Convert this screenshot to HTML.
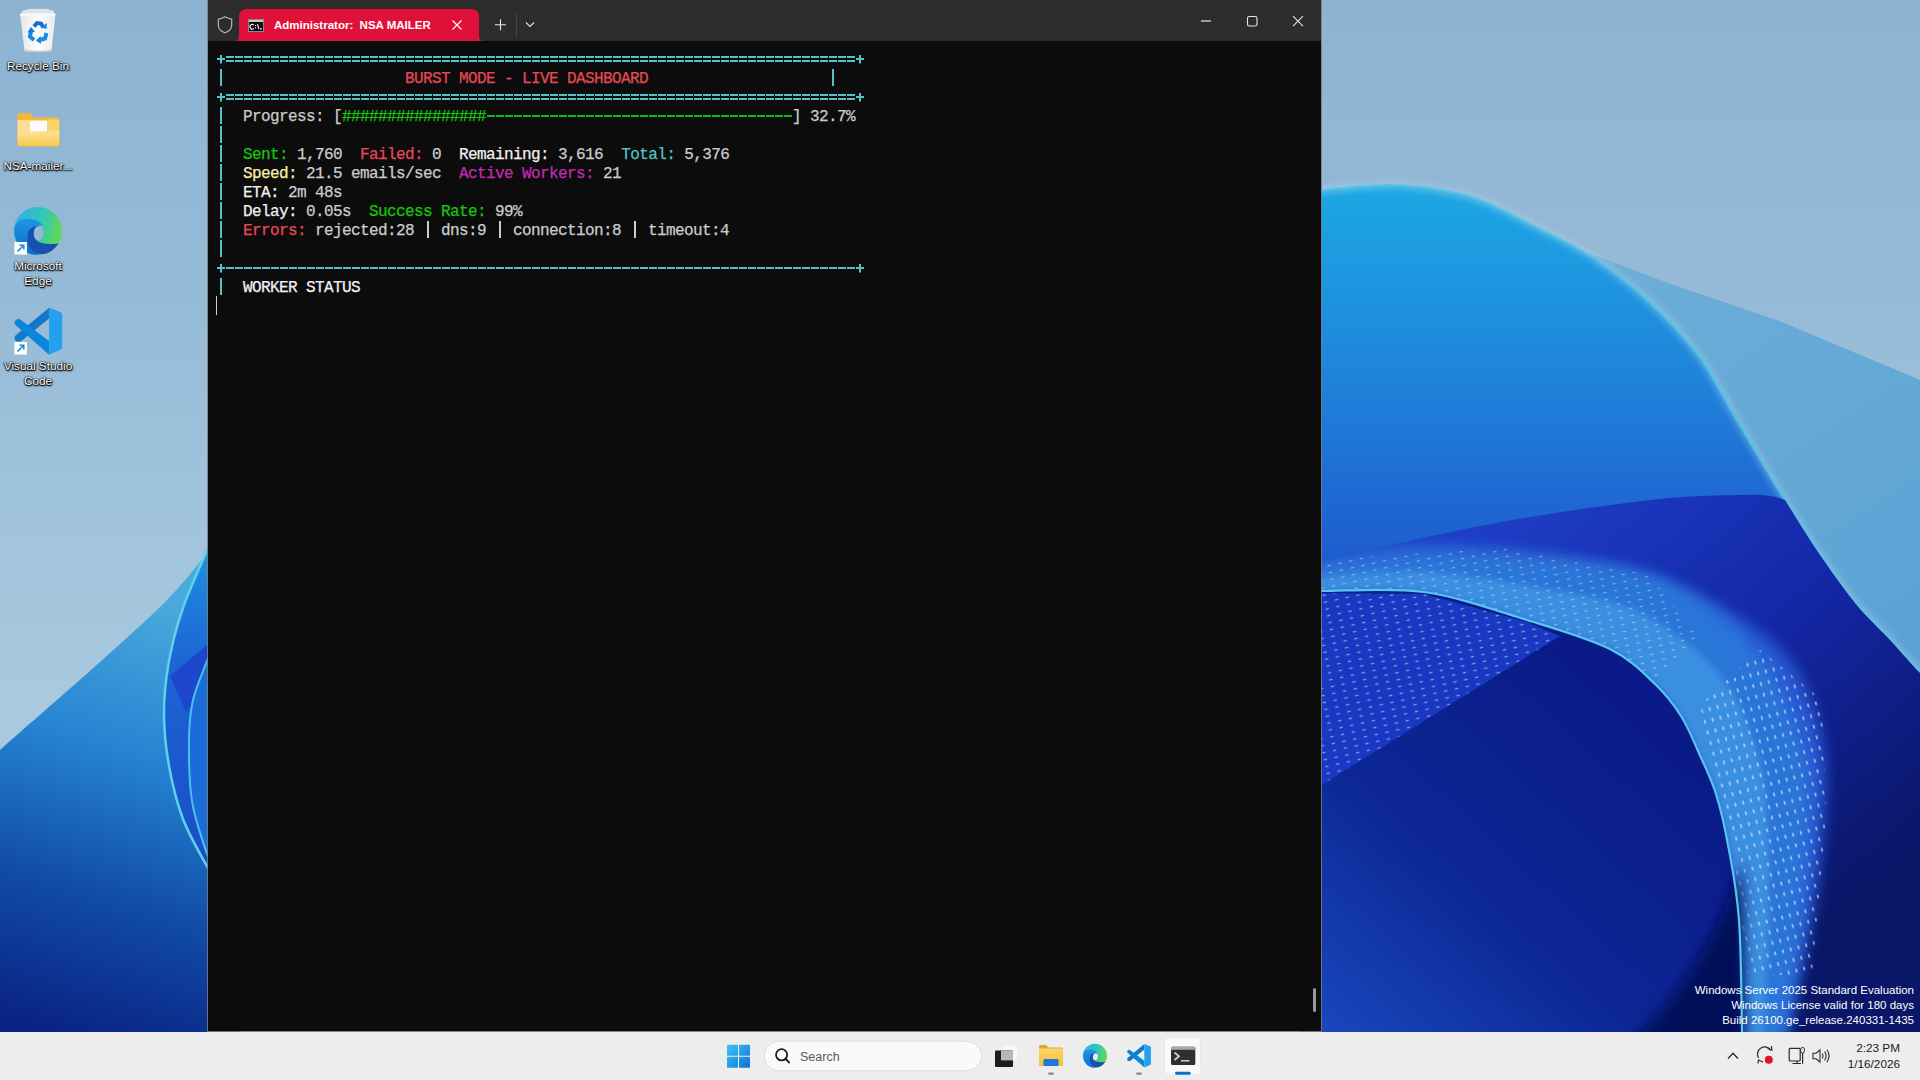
<!DOCTYPE html>
<html><head><meta charset="utf-8">
<style>
*{margin:0;padding:0;box-sizing:border-box}
html,body{width:1920px;height:1080px;overflow:hidden;position:relative;font-family:"Liberation Sans",sans-serif}
#wall{position:absolute;left:0;top:0;width:1920px;height:1080px}
.abs{position:absolute}
/* terminal */
#win{position:absolute;left:208px;top:0;width:1113px;height:1031px;background:#0c0c0c;box-shadow:0 0 0 1px rgba(125,125,125,.85)}
#tbar{position:absolute;left:0;top:0;width:1113px;height:41px;background:#2c2c2c}
#term{position:absolute;left:8px;top:49px;font-family:"Liberation Mono",monospace;font-size:16px;letter-spacing:-0.6px;-webkit-text-stroke:0.25px currentColor;line-height:19px;color:#cccccc;white-space:pre}
.ln{position:absolute;left:0;height:19px;white-space:pre}
.ln{transform:translateY(2px)}
.ln .pp{position:relative;top:-2px}
.pb{display:inline-block;vertical-align:top;position:relative;top:-2px;width:306px;height:19px;background:repeating-linear-gradient(90deg,transparent 0 1px,#14b41c 1px 9px) no-repeat 0 9px/306px 2px}
.c{color:#55c3c5}.r{color:#e74856}.g{color:#16c60c}.y{color:#f9f1a5}.m{color:#c22bb0}.w{color:#f2f2f2}

.pp{display:inline-block;width:9px;height:19px;vertical-align:top;background:linear-gradient(currentColor,currentColor) no-repeat 4px 1px/2px 17px}
.bd{position:absolute;left:0;width:648px;height:19px}
.bd::before,.bd::after{content:"";position:absolute;top:0;width:9px;height:19px;background:linear-gradient(#55c3c5,#55c3c5) no-repeat 0.5px 9px/8.5px 2px,linear-gradient(#55c3c5,#55c3c5) no-repeat 4px 5.5px/2px 8.5px}
.bd::before{left:0}.bd::after{left:639px}
.dbl{background:repeating-linear-gradient(90deg,transparent 0 1px,#55c3c5 1px 9px) no-repeat 9px 7px/630px 2px,repeating-linear-gradient(90deg,transparent 0 1px,#55c3c5 1px 9px) no-repeat 9px 11px/630px 2px}
.sgl{background:repeating-linear-gradient(90deg,transparent 0 1px,#55c3c5 1px 9px) no-repeat 9px 9px/630px 2px}
/* taskbar */
#task{position:absolute;left:0;top:1032px;width:1920px;height:48px;background:#ededed}
.dl{position:absolute;color:#fff;font-size:11.75px;text-align:center;width:76px;left:0;line-height:15px;text-shadow:0 0 1px #000,0 0 2px #000,1px 1px 2px #000,0 1px 1px #000}
#wm{position:absolute;right:6px;top:983px;color:#fff;font-size:11.5px;line-height:15px;text-align:right}
</style></head><body>
<svg id="wall" width="1920" height="1080" viewBox="0 0 1920 1080">
<defs>
<linearGradient id="sky" x1="0" y1="0" x2="0" y2="1080" gradientUnits="userSpaceOnUse"><stop offset="0" stop-color="#8cb3d2"/><stop offset="0.28" stop-color="#96bbd7"/><stop offset="0.46" stop-color="#a0c3dc"/><stop offset="0.65" stop-color="#a8c9de"/></linearGradient>
<linearGradient id="gA" x1="0" y1="185" x2="0" y2="560" gradientUnits="userSpaceOnUse"><stop offset="0" stop-color="#1ba8e4"/><stop offset="0.45" stop-color="#1f88dc"/><stop offset="1" stop-color="#1e5cce"/></linearGradient>
<linearGradient id="gB" x1="1600" y1="250" x2="1900" y2="700" gradientUnits="userSpaceOnUse"><stop offset="0" stop-color="#6eaed8"/><stop offset="1" stop-color="#5aa2d4"/></linearGradient>
<linearGradient id="gR" x1="1500" y1="500" x2="1850" y2="900" gradientUnits="userSpaceOnUse"><stop offset="0" stop-color="#1f3ec6"/><stop offset="0.5" stop-color="#1428a8"/><stop offset="1" stop-color="#0a1668"/></linearGradient>
<linearGradient id="gD" x1="1450" y1="560" x2="1850" y2="950" gradientUnits="userSpaceOnUse"><stop offset="0" stop-color="#3f98e2"/><stop offset="0.5" stop-color="#3585e0"/><stop offset="1" stop-color="#3a7ede"/></linearGradient>
<linearGradient id="gI" x1="1330" y1="1040" x2="1640" y2="700" gradientUnits="userSpaceOnUse"><stop offset="0" stop-color="#1848bc"/><stop offset="0.45" stop-color="#0d2796"/><stop offset="1" stop-color="#0a1a88"/></linearGradient>
<linearGradient id="gL" x1="170" y1="600" x2="40" y2="1031" gradientUnits="userSpaceOnUse"><stop offset="0" stop-color="#4aaadc"/><stop offset="0.35" stop-color="#2684d2"/><stop offset="0.68" stop-color="#114ba8"/><stop offset="1" stop-color="#0a2282"/></linearGradient>
<linearGradient id="gArc" x1="0" y1="548" x2="0" y2="868" gradientUnits="userSpaceOnUse"><stop offset="0" stop-color="#2090e0"/><stop offset="0.35" stop-color="#1c66d4"/><stop offset="1" stop-color="#1a4cc8"/></linearGradient>
<filter id="bl6" x="-20%" y="-20%" width="140%" height="140%"><feGaussianBlur stdDeviation="7"/></filter>
<filter id="bl3" x="-20%" y="-20%" width="140%" height="140%"><feGaussianBlur stdDeviation="3"/></filter>
<clipPath id="clipR"><path d="M1300.0 566.0 C1303.3 565.3 1289.2 568.8 1320.0 562.0 C1350.8 555.2 1430.0 535.3 1485.0 525.0 C1540.0 514.7 1607.5 505.0 1650.0 500.0 C1692.5 495.0 1720.0 495.7 1740.0 495.0 C1760.0 494.3 1762.5 495.2 1770.0 496.0 C1777.5 496.8 1782.5 499.3 1785.0 500.0 L1785.0 500.0 C1790.2 508.2 1804.3 531.8 1816.0 549.0 C1827.7 566.2 1842.7 587.8 1855.0 603.0 C1867.3 618.2 1879.2 628.3 1890.0 640.0 C1900.8 651.7 1911.7 664.7 1920.0 673.0 C1928.3 681.3 1936.7 687.2 1940.0 690.0 L1940 1045 L1300 1045 Z"/></clipPath>
<pattern id="dotV" width="8" height="11" patternUnits="userSpaceOnUse" patternTransform="rotate(-15)"><ellipse cx="4" cy="5.5" rx="0.9" ry="2.2" fill="#e8ecff"/></pattern>
<pattern id="dotH" width="11" height="7" patternUnits="userSpaceOnUse" patternTransform="rotate(-12)"><ellipse cx="5.5" cy="3.5" rx="2" ry="0.8" fill="#e8ecff"/></pattern>
</defs>
<rect width="1920" height="1080" fill="url(#sky)"/>
<path d="M1500 218 L1580 250 L1671 284 L1782 322 L1920 380 L1960 397 L1960 1045 L1300 1045 Z" fill="url(#gB)"/>
<path d="M1290.0 194.0 C1295.0 193.4 1306.7 191.8 1320.0 190.5 C1333.3 189.2 1356.7 186.8 1370.0 186.0 C1383.3 185.2 1388.3 184.8 1400.0 185.5 C1411.7 186.2 1426.7 187.6 1440.0 190.0 C1453.3 192.4 1465.7 194.7 1480.0 200.0 C1494.3 205.3 1507.3 212.5 1526.0 222.0 C1544.7 231.5 1571.3 243.6 1592.0 257.0 C1612.7 270.4 1632.2 286.0 1650.0 302.5 C1667.8 319.0 1685.2 337.6 1699.0 356.0 C1712.8 374.4 1720.0 391.2 1733.0 413.0 C1746.0 434.8 1763.2 464.3 1777.0 487.0 C1790.8 509.7 1803.0 529.7 1816.0 549.0 C1829.0 568.3 1842.7 587.8 1855.0 603.0 C1867.3 618.2 1879.2 628.3 1890.0 640.0 C1900.8 651.7 1911.7 664.7 1920.0 673.0 C1928.3 681.3 1936.7 687.2 1940.0 690.0 L1940 1045 L1300 1045 Z" fill="url(#gA)"/>
<path d="M1290.0 194.0 C1295.0 193.4 1306.7 191.8 1320.0 190.5 C1333.3 189.2 1356.7 186.8 1370.0 186.0 C1383.3 185.2 1388.3 184.8 1400.0 185.5 C1411.7 186.2 1426.7 187.6 1440.0 190.0 C1453.3 192.4 1465.7 194.7 1480.0 200.0 C1494.3 205.3 1507.3 212.5 1526.0 222.0 C1544.7 231.5 1571.3 243.6 1592.0 257.0 C1612.7 270.4 1632.2 286.0 1650.0 302.5 C1667.8 319.0 1685.2 337.6 1699.0 356.0 C1712.8 374.4 1720.0 391.2 1733.0 413.0 C1746.0 434.8 1763.2 464.3 1777.0 487.0 C1790.8 509.7 1803.0 529.7 1816.0 549.0 C1829.0 568.3 1842.7 587.8 1855.0 603.0 C1867.3 618.2 1879.2 628.3 1890.0 640.0 C1900.8 651.7 1911.7 664.7 1920.0 673.0 C1928.3 681.3 1936.7 687.2 1940.0 690.0 " fill="none" stroke="#b4d4ea" stroke-width="6" opacity="0.5" filter="url(#bl3)"/>
<path d="M1290.0 194.0 C1295.0 193.4 1306.7 191.8 1320.0 190.5 C1333.3 189.2 1356.7 186.8 1370.0 186.0 C1383.3 185.2 1388.3 184.8 1400.0 185.5 C1411.7 186.2 1426.7 187.6 1440.0 190.0 C1453.3 192.4 1465.7 194.7 1480.0 200.0 C1494.3 205.3 1507.3 212.5 1526.0 222.0 C1544.7 231.5 1571.3 243.6 1592.0 257.0 C1612.7 270.4 1632.2 286.0 1650.0 302.5 C1667.8 319.0 1685.2 337.6 1699.0 356.0 C1712.8 374.4 1720.0 391.2 1733.0 413.0 C1746.0 434.8 1763.2 464.3 1777.0 487.0 C1790.8 509.7 1803.0 529.7 1816.0 549.0 C1829.0 568.3 1842.7 587.8 1855.0 603.0 C1867.3 618.2 1879.2 628.3 1890.0 640.0 C1900.8 651.7 1911.7 664.7 1920.0 673.0 C1928.3 681.3 1936.7 687.2 1940.0 690.0 " fill="none" stroke="#4cc4e8" stroke-width="2.5" opacity="0.85"/>
<path d="M1300.0 566.0 C1303.3 565.3 1289.2 568.8 1320.0 562.0 C1350.8 555.2 1430.0 535.3 1485.0 525.0 C1540.0 514.7 1607.5 505.0 1650.0 500.0 C1692.5 495.0 1720.0 495.7 1740.0 495.0 C1760.0 494.3 1762.5 495.2 1770.0 496.0 C1777.5 496.8 1782.5 499.3 1785.0 500.0 L1785.0 500.0 C1790.2 508.2 1804.3 531.8 1816.0 549.0 C1827.7 566.2 1842.7 587.8 1855.0 603.0 C1867.3 618.2 1879.2 628.3 1890.0 640.0 C1900.8 651.7 1911.7 664.7 1920.0 673.0 C1928.3 681.3 1936.7 687.2 1940.0 690.0 L1940 1045 L1300 1045 Z" fill="url(#gR)"/>
<g clip-path="url(#clipR)"><path d="M1300.0 548.0 C1303.5 547.7 1301.0 546.7 1321.0 546.0 C1341.0 545.3 1383.5 542.8 1420.0 544.0 C1456.5 545.2 1501.7 547.3 1540.0 553.0 C1578.3 558.7 1618.3 568.2 1650.0 578.0 C1681.7 587.8 1706.7 598.3 1730.0 612.0 C1753.3 625.7 1775.0 640.3 1790.0 660.0 C1805.0 679.7 1814.2 706.7 1820.0 730.0 C1825.8 753.3 1825.8 771.7 1825.0 800.0 C1824.2 828.3 1820.0 866.7 1815.0 900.0 C1810.0 933.3 1800.8 975.8 1795.0 1000.0 C1789.2 1024.2 1782.5 1037.5 1780.0 1045.0 L1742 1045 L1742.0 1045.0 C1742.0 1042.5 1742.5 1050.8 1742.0 1030.0 C1741.5 1009.2 1741.2 950.0 1739.0 920.0 C1736.8 890.0 1732.8 871.0 1729.0 850.0 C1725.2 829.0 1721.2 810.5 1716.0 794.0 C1710.8 777.5 1703.8 764.0 1698.0 751.0 C1692.2 738.0 1688.0 727.0 1681.0 716.0 C1674.0 705.0 1667.8 696.2 1656.0 685.0 C1644.2 673.8 1631.5 659.8 1610.0 649.0 C1588.5 638.2 1558.0 629.5 1527.0 620.0 C1496.0 610.5 1458.3 596.8 1424.0 592.0 C1389.7 587.2 1341.7 591.2 1321.0 591.0 C1300.3 590.8 1303.5 591.0 1300.0 591.0 Z" fill="#2558d2" filter="url(#bl6)"/>
<path d="M1300.0 566.0 C1303.5 565.5 1299.6 565.3 1321.2 563.0 C1342.8 560.7 1392.1 553.2 1429.6 552.4 C1467.0 551.5 1509.6 554.4 1546.0 557.9 C1582.5 561.3 1619.1 563.4 1648.2 573.1 C1677.4 582.8 1701.7 601.0 1721.2 615.9 C1740.7 630.8 1754.0 646.6 1765.4 662.3 C1776.7 678.0 1782.4 692.8 1789.2 710.1 C1796.1 727.3 1803.6 744.7 1806.7 765.6 C1809.7 786.5 1808.7 810.6 1807.7 835.6 C1806.7 860.6 1804.3 883.3 1800.8 915.5 C1797.4 947.7 1790.5 1007.3 1787.0 1028.9 C1783.5 1050.5 1781.2 1042.3 1780.0 1045.0 L1742 1045 L1742.0 1045.0 C1742.0 1042.5 1742.5 1050.8 1742.0 1030.0 C1741.5 1009.2 1741.2 950.0 1739.0 920.0 C1736.8 890.0 1732.8 871.0 1729.0 850.0 C1725.2 829.0 1721.2 810.5 1716.0 794.0 C1710.8 777.5 1703.8 764.0 1698.0 751.0 C1692.2 738.0 1688.0 727.0 1681.0 716.0 C1674.0 705.0 1667.8 696.2 1656.0 685.0 C1644.2 673.8 1631.5 659.8 1610.0 649.0 C1588.5 638.2 1558.0 629.5 1527.0 620.0 C1496.0 610.5 1458.3 596.8 1424.0 592.0 C1389.7 587.2 1341.7 591.2 1321.0 591.0 C1300.3 590.8 1303.5 591.0 1300.0 591.0 Z" fill="#2c74d8" filter="url(#bl6)"/>
<path d="M1300.0 578.0 C1303.5 577.8 1300.0 578.0 1321.1 577.0 C1342.2 576.0 1390.8 570.4 1426.8 572.2 C1462.8 573.9 1503.0 581.5 1537.0 587.5 C1570.9 593.4 1604.9 598.0 1630.7 607.9 C1656.5 617.9 1675.4 634.2 1691.7 647.2 C1707.9 660.2 1718.7 672.5 1728.2 685.9 C1737.8 699.4 1743.2 712.6 1749.1 728.1 C1755.0 743.6 1760.5 759.9 1763.7 779.1 C1766.9 798.2 1767.5 819.7 1768.3 842.8 C1769.2 865.9 1769.6 886.7 1768.9 917.8 C1768.2 948.9 1765.5 1008.3 1764.0 1029.5 C1762.5 1050.7 1760.7 1042.4 1760.0 1045.0 L1742 1045 L1742.0 1045.0 C1742.0 1042.5 1742.5 1050.8 1742.0 1030.0 C1741.5 1009.2 1741.2 950.0 1739.0 920.0 C1736.8 890.0 1732.8 871.0 1729.0 850.0 C1725.2 829.0 1721.2 810.5 1716.0 794.0 C1710.8 777.5 1703.8 764.0 1698.0 751.0 C1692.2 738.0 1688.0 727.0 1681.0 716.0 C1674.0 705.0 1667.8 696.2 1656.0 685.0 C1644.2 673.8 1631.5 659.8 1610.0 649.0 C1588.5 638.2 1558.0 629.5 1527.0 620.0 C1496.0 610.5 1458.3 596.8 1424.0 592.0 C1389.7 587.2 1341.7 591.2 1321.0 591.0 C1300.3 590.8 1303.5 591.0 1300.0 591.0 Z" fill="#3b8fe0" filter="url(#bl3)"/>
<path d="M1700 705 L1760 650 L1822 700 L1826 820 L1812 975 L1748 975 L1735 860 Z" fill="url(#dotV)" opacity="0.7"/>
<path d="M1321 560 L1500 548 L1650 575 L1700 640 L1640 690 L1527 618 L1424 590 L1321 590 Z" fill="url(#dotH)" opacity="0.45"/></g>
<path d="M1300.0 591.0 C1303.5 591.0 1300.3 590.8 1321.0 591.0 C1341.7 591.2 1389.7 587.2 1424.0 592.0 C1458.3 596.8 1496.0 610.5 1527.0 620.0 C1558.0 629.5 1588.5 638.2 1610.0 649.0 C1631.5 659.8 1644.2 673.8 1656.0 685.0 C1667.8 696.2 1674.0 705.0 1681.0 716.0 C1688.0 727.0 1692.2 738.0 1698.0 751.0 C1703.8 764.0 1710.8 777.5 1716.0 794.0 C1721.2 810.5 1725.2 829.0 1729.0 850.0 C1732.8 871.0 1736.8 890.0 1739.0 920.0 C1741.2 950.0 1741.5 1009.2 1742.0 1030.0 C1742.5 1050.8 1742.0 1042.5 1742.0 1045.0 L1300 1045 Z" fill="url(#gI)"/>
<path d="M1300 593 L1424 594 L1527 622 L1560 636 L1320 786 L1300 798 Z" fill="#1a3ac4" opacity="0.95"/>
<path d="M1300 593 L1424 594 L1527 622 L1560 636 L1320 786 L1300 798 Z" fill="url(#dotH)" opacity="0.55"/>
<path d="M1630 1045 L1745 1045 L1742 860 Q1715 960 1630 1045 Z" fill="#060e52" filter="url(#bl6)" opacity="0.9"/>
<path d="M1300.0 591.0 C1303.5 591.0 1300.3 590.8 1321.0 591.0 C1341.7 591.2 1389.7 587.2 1424.0 592.0 C1458.3 596.8 1496.0 610.5 1527.0 620.0 C1558.0 629.5 1588.5 638.2 1610.0 649.0 C1631.5 659.8 1644.2 673.8 1656.0 685.0 C1667.8 696.2 1674.0 705.0 1681.0 716.0 C1688.0 727.0 1692.2 738.0 1698.0 751.0 C1703.8 764.0 1710.8 777.5 1716.0 794.0 C1721.2 810.5 1725.2 829.0 1729.0 850.0 C1732.8 871.0 1736.8 890.0 1739.0 920.0 C1741.2 950.0 1741.5 1009.2 1742.0 1030.0 C1742.5 1050.8 1742.0 1042.5 1742.0 1045.0 " fill="none" stroke="#58c6ee" stroke-width="2.2"/>
<path d="M-20.0 770.0 C-16.7 766.7 -20.0 768.0 0.0 750.0 C20.0 732.0 72.5 686.7 100.0 662.0 C127.5 637.3 147.5 619.7 165.0 602.0 C182.5 584.3 192.5 571.0 205.0 556.0 C217.5 541.0 234.2 519.3 240.0 512.0 L240 1045 L-20 1045 Z" fill="url(#gL)"/>
<path d="M215.0 530.0 C213.8 533.0 213.3 535.0 208.0 548.0 C202.7 561.0 189.5 589.2 183.0 608.0 C176.5 626.8 172.2 643.5 169.0 661.0 C165.8 678.5 164.0 695.5 164.0 713.0 C164.0 730.5 165.8 748.3 169.0 766.0 C172.2 783.7 176.5 802.0 183.0 819.0 C189.5 836.0 201.8 857.0 208.0 868.0 C214.2 879.0 218.0 882.2 220.0 885.0 L240 885 L240 530 Z" fill="url(#gArc)"/>
<path d="M170 676 L212 641 L212 700 L196 700 L186 712 Z" fill="#1c46cc"/>
<path d="M215.0 640.0 C213.7 643.5 210.7 651.0 207.0 661.0 C203.3 671.0 196.0 686.8 193.0 700.0 C190.0 713.2 189.2 723.2 189.0 740.0 C188.8 756.8 189.0 782.0 192.0 801.0 C195.0 820.0 203.2 842.5 207.0 854.0 C210.8 865.5 213.7 867.3 215.0 870.0 L215 870 L215 640 Z" fill="#1a6cd8"/>
<path d="M215.0 640.0 C213.7 643.5 210.7 651.0 207.0 661.0 C203.3 671.0 196.0 686.8 193.0 700.0 C190.0 713.2 189.2 723.2 189.0 740.0 C188.8 756.8 189.0 782.0 192.0 801.0 C195.0 820.0 203.2 842.5 207.0 854.0 C210.8 865.5 213.7 867.3 215.0 870.0 " fill="none" stroke="#4cc0ec" stroke-width="2"/>
<path d="M215.0 530.0 C213.8 533.0 213.3 535.0 208.0 548.0 C202.7 561.0 189.5 589.2 183.0 608.0 C176.5 626.8 172.2 643.5 169.0 661.0 C165.8 678.5 164.0 695.5 164.0 713.0 C164.0 730.5 165.8 748.3 169.0 766.0 C172.2 783.7 176.5 802.0 183.0 819.0 C189.5 836.0 201.8 857.0 208.0 868.0 C214.2 879.0 218.0 882.2 220.0 885.0 " fill="none" stroke="#5ed2ea" stroke-width="2.5"/>
</svg>


<!-- desktop icons -->
<svg class="abs" style="left:0;top:0" width="80" height="400" viewBox="0 0 80 400">
 <defs>
  <linearGradient id="binG" x1="0" y1="0" x2="1" y2="0"><stop offset="0" stop-color="#e4e8ec"/><stop offset="0.5" stop-color="#fbfbfc"/><stop offset="1" stop-color="#e8ecef"/></linearGradient>
  <linearGradient id="fldF" x1="0" y1="0" x2="0" y2="1"><stop offset="0" stop-color="#fde39a"/><stop offset="1" stop-color="#f9c94a"/></linearGradient>
  <linearGradient id="edgeT" x1="0" y1="0" x2="1" y2="0.3"><stop offset="0" stop-color="#32aee8"/><stop offset="0.55" stop-color="#2ec4c4"/><stop offset="1" stop-color="#5cd85a"/></linearGradient>
  <linearGradient id="edgeB" x1="0" y1="0" x2="0" y2="1"><stop offset="0" stop-color="#1f95e0"/><stop offset="1" stop-color="#0a6fcf"/></linearGradient>
 </defs>
 <!-- recycle bin -->
 <path d="M22 11 Q28 8 38 9 Q48 8 54 11 L54 14 L22 14 Z" fill="#dfe3e6"/>
 <path d="M20 13.5 L55.5 13.5 L51.5 51 Q38 53 24.5 51 Z" fill="url(#binG)"/>
 <path d="M20 13.5 L55.5 13.5 L55 16 L20.5 16 Z" fill="#f4f6f7"/>
 <path d="M24.5 49.5 Q38 52 51.5 49.5 L51.5 51.5 Q38 53 24.5 51.5 Z" fill="#c9cdd0"/>
 <g stroke-linecap="butt" fill="none" stroke-width="4">
  <path d="M34 26.5 L37 23 L41 23.5 L43.5 27.5" stroke="#1670d0"/>
  <path d="M40.5 27.5 L46.5 29 L47 23 Z" fill="#1a86e0" stroke="none"/>
  <path d="M46.5 33 L45 38.5 L39.5 40" stroke="#1a8ce6"/>
  <path d="M40.5 36 L36 40.5 L41 44 Z" fill="#1680e0" stroke="none"/>
  <path d="M34 40 L30 36.5 L31 31" stroke="#1688e4"/>
  <path d="M27.5 32.5 L31 27 L35 32 Z" fill="#1478d8" stroke="none"/>
 </g>
 <!-- folder -->
 <path d="M17.5 115 Q17.5 113.3 19.5 113.3 L30 113.3 L33.5 117.5 L57.5 117.5 Q59.3 117.5 59.3 119.5 L59.3 144.5 Q59.3 146.3 57.5 146.3 L19.3 146.3 Q17.5 146.3 17.5 144.5 Z" fill="#f3b934"/>
 <rect x="30" y="120.5" width="17" height="12" fill="#fafafa"/>
 <path d="M17.5 132 L59.3 130.5 L59.3 144.5 Q59.3 146.3 57.5 146.3 L19.3 146.3 Q17.5 146.3 17.5 144.5 Z" fill="url(#fldF)"/>
 <path d="M17.5 120 L30 120 L30 132 L17.5 132 Z" fill="#fbe0a0" opacity="0.9"/>
 <path d="M47 119.5 L59.3 119.5 L59.3 131 L47 131.5 Z" fill="#fbd775" opacity="0.9"/>
 <!-- edge -->
 <g transform="translate(14 207)">
  <path d="M46.8 31.4 A24 24 0 1 0 24.5 48 Q36 47 44.5 36.5 Z" fill="url(#edgeT)"/>
  <path d="M0.3 21 Q2 12.5 12.5 11.8 Q22.5 11.5 29 18 Q21 18 17 23 Q12 30 15 38 Q18 45 25 48 Q12 48.5 4.5 38 Q-0.5 30 0.3 21 Z" fill="url(#edgeB)"/>
  <path d="M13.4 29.5 Q13.5 21.5 20 19.5 Q26.5 18 30 23 Q23 20.5 20.5 26.5 Q19.5 33 26 35.5 Q34 38 44.5 36.5 Q40 43.5 32.5 46.5 Q25 48.5 19.5 45 Q13.2 40 13.4 29.5 Z" fill="#1851ac"/>
  <path d="M19.8 25.5 Q20 19.8 24.8 19.2 Q29.6 19.2 29.7 25 Q29.7 31.2 25.5 33.2 Q20.5 33.5 19.8 28 Z" fill="#94b8d5"/>
 </g>
 <!-- vscode -->
 <g transform="translate(14 307)">
  <path d="M35.1 0.8 L35.1 11.5 L8 33.5 Q4 36 1.5 33.5 Q-0.5 31 1.5 28.5 Z" fill="#1677c6"/>
  <path d="M1.5 13.5 Q4 11 7 13 L35.1 34 L35.1 47.7 L1.5 18 Q-0.5 15.8 1.5 13.5 Z" fill="#0a87da"/>
  <path d="M35.1 0.5 L46.5 5.2 Q48.2 6 48.2 8 L48.2 40 Q48.2 42 46.5 42.8 L35.1 47.7 Z" fill="#25a0ec"/>
 </g>
 <!-- shortcut arrows -->
 <g>
  <rect x="14.4" y="242" width="12.5" height="12.5" fill="#fff"/>
  <path d="M17.5 251.5 L23.5 245.5 M19.5 245.2 L23.8 245.2 L23.8 249.5" stroke="#1a8ad8" stroke-width="1.6" fill="none"/>
  <rect x="14.4" y="342" width="12.5" height="12.5" fill="#fff"/>
  <path d="M17.5 351.5 L23.5 345.5 M19.5 345.2 L23.8 345.2 L23.8 349.5" stroke="#1a8ad8" stroke-width="1.6" fill="none"/>
 </g>
</svg>
<div class="dl" style="top:58px">Recycle Bin</div>
<div class="dl" style="top:158px">NSA-mailer...</div>
<div class="dl" style="top:258px">Microsoft<br>Edge</div>
<div class="dl" style="top:358px">Visual Studio<br>Code</div>

<div id="win">
 <div id="tbar">
  <svg class="abs" style="left:0;top:0" width="1113" height="41" viewBox="0 0 1113 41">
   <path d="M10.3 19.2 Q14 18.6 17 16.8 Q20 18.6 23.7 19.2 L23.7 25.5 Q23.5 30.5 17 32.8 Q10.5 30.5 10.3 25.5 Z" fill="none" stroke="#b8b8b8" stroke-width="1.2"/>
   <path d="M27 41 Q31 41 31 36 L31 17 Q31 9 39 9 L263 9 Q271 9 271 17 L271 36 Q271 41 275 41 Z" fill="#df1139"/>
   <rect x="40.5" y="19.5" width="15" height="12" fill="#0c0c0c" stroke="#8a8a8a" stroke-width="1"/>
   <rect x="41" y="20" width="14" height="2" fill="#c8c8c8"/>
   <path d="M45.8 25.2 A2.1 2.5 0 1 0 45.8 28.4" fill="none" stroke="#fff" stroke-width="1.1"/><rect x="47" y="25" width="1.1" height="1.1" fill="#fff"/><rect x="47" y="27.2" width="1.1" height="1.1" fill="#fff"/><path d="M49.5 24.2 L50.8 29.2" stroke="#fff" stroke-width="1.1"/><rect x="52" y="28.3" width="2" height="1.1" fill="#fff"/>
   <path d="M244.5 20.5 L253.5 29.5 M253.5 20.5 L244.5 29.5" stroke="#fff" stroke-width="1.1"/>
   <path d="M287 24.7 L298 24.7 M292.5 19.2 L292.5 30.2" stroke="#e8e8e8" stroke-width="1.1"/>
   <path d="M308.5 13 L308.5 37" stroke="#444" stroke-width="1"/>
   <path d="M318 22.5 L322 26.5 L326 22.5" fill="none" stroke="#e0e0e0" stroke-width="1.1"/>
   <path d="M993 21 L1003 21" stroke="#e8e8e8" stroke-width="1.2"/>
   <rect x="1039.5" y="16.5" width="9.5" height="9.5" rx="1.8" fill="none" stroke="#e8e8e8" stroke-width="1.1"/>
   <path d="M1085 16.2 L1095 26.2 M1095 16.2 L1085 26.2" stroke="#e8e8e8" stroke-width="1.1"/>
  </svg>
  <div class="abs" style="left:66px;top:18px;color:#fff;font-size:11.5px;font-weight:bold;line-height:15px;white-space:pre">Administrator:  NSA MAILER</div>
 </div>
 <div id="term">
<div class="bd dbl" style="top:0"></div>
<div class="ln" style="top:19px"><span class="pp c"></span>                    <span class="r">BURST MODE - LIVE DASHBOARD</span>                    <span class="pp c"></span></div>
<div class="bd dbl" style="top:38px"></div>
<div class="ln" style="top:57px"><span class="pp c"></span>  Progress: [<span class="g">################</span><span class="pb"></span>] 32.7%</div>
<div class="ln" style="top:76px"><span class="pp c"></span></div>
<div class="ln" style="top:95px"><span class="pp c"></span>  <span class="g">Sent:</span> 1,760  <span class="r">Failed:</span> 0  <span class="w">Remaining:</span> 3,616  <span class="c">Total:</span> 5,376</div>
<div class="ln" style="top:114px"><span class="pp c"></span>  <span class="y">Speed:</span> 21.5 emails/sec  <span class="m">Active Workers:</span> 21</div>
<div class="ln" style="top:133px"><span class="pp c"></span>  <span class="w">ETA:</span> 2m 48s</div>
<div class="ln" style="top:152px"><span class="pp c"></span>  <span class="w">Delay:</span> 0.05s  <span class="g">Success Rate:</span> 99%</div>
<div class="ln" style="top:171px"><span class="pp c"></span>  <span class="r">Errors:</span> rejected:28 <span class="pp"></span> dns:9 <span class="pp"></span> connection:8 <span class="pp"></span> timeout:4</div>
<div class="ln" style="top:190px"><span class="pp c"></span></div>
<div class="bd sgl" style="top:209px"></div>
<div class="ln" style="top:228px"><span class="pp c"></span>  <span class="w">WORKER STATUS</span></div>
<div class="abs" style="left:0;top:247px;width:1px;height:19px;background:#cfcfcf"></div>
 </div>
 <div class="abs" style="left:1105px;top:988px;width:3px;height:24px;border-radius:2px;background:#9a9a9a"></div>
</div>

<div id="task">
 <svg class="abs" style="left:0;top:0" width="1920" height="48" viewBox="0 1032 1920 48">
  <defs>
   <linearGradient id="wlg" x1="727" y1="1045" x2="750" y2="1068" gradientUnits="userSpaceOnUse"><stop offset="0" stop-color="#3fc3f2"/><stop offset="1" stop-color="#0a74d6"/></linearGradient>
   <linearGradient id="fex" x1="0" y1="0" x2="0" y2="1"><stop offset="0" stop-color="#fcd56a"/><stop offset="1" stop-color="#f7bf3a"/></linearGradient>
  </defs>
  <!-- windows logo -->
  <g fill="url(#wlg)">
   <rect x="727" y="1044.8" width="11" height="11" rx="0.8"/><rect x="739" y="1044.8" width="11" height="11" rx="0.8"/>
   <rect x="727" y="1056.8" width="11" height="11" rx="0.8"/><rect x="739" y="1056.8" width="11" height="11" rx="0.8"/>
  </g>
  <!-- search box -->
  <rect x="764.2" y="1041.2" width="217.6" height="29.6" rx="14.8" fill="#fafafa" stroke="#dcdcdc" stroke-width="1"/>
  <circle cx="781.6" cy="1054.8" r="5.6" fill="none" stroke="#1f1f1f" stroke-width="1.8"/>
  <path d="M785.6 1058.8 L789 1062.4" stroke="#1f1f1f" stroke-width="2" stroke-linecap="round"/>
  <text x="800" y="1060.6" font-family="Liberation Sans" font-size="12.5" fill="#5b5b5b">Search</text>
  <!-- task view -->
  <rect x="1001" y="1045" width="17.2" height="15.4" rx="1" fill="#f6f6f6" stroke="#e2e2e2" stroke-width="0.6"/>
  <rect x="995" y="1050.6" width="18" height="16.4" rx="1.2" fill="#1c1c1c"/>
  <rect x="1001" y="1050.6" width="12" height="9.8" fill="#b9b9b9"/>
  <!-- file explorer -->
  <path d="M1039 1046.2 Q1039 1045 1040.2 1045 L1046 1045 L1048.5 1047.5 L1061.7 1047.5 Q1062.9 1047.5 1062.9 1048.7 L1062.9 1065 Q1062.9 1066 1061.7 1066 L1040.2 1066 Q1039 1066 1039 1065 Z" fill="#e0a92e"/>
  <path d="M1039 1048.5 L1062.9 1048.5 L1062.9 1065 Q1062.9 1066 1061.7 1066 L1040.2 1066 Q1039 1066 1039 1065 Z" fill="url(#fex)"/>
  <rect x="1043.5" y="1059" width="15" height="7" rx="1.2" fill="#1c7ad8"/>
  <rect x="1048" y="1072.4" width="6" height="2.4" rx="1.2" fill="#8a8a8a"/>
  <!-- edge -->
  <g transform="translate(1083 1043.7) scale(0.5)">
  <path d="M46.8 31.4 A24 24 0 1 0 24.5 48 Q36 47 44.5 36.5 Z" fill="url(#edgeT)"/>
  <path d="M0.3 21 Q2 12.5 12.5 11.8 Q22.5 11.5 29 18 Q21 18 17 23 Q12 30 15 38 Q18 45 25 48 Q12 48.5 4.5 38 Q-0.5 30 0.3 21 Z" fill="url(#edgeB)"/>
  <path d="M13.4 29.5 Q13.5 21.5 20 19.5 Q26.5 18 30 23 Q23 20.5 20.5 26.5 Q19.5 33 26 35.5 Q34 38 44.5 36.5 Q40 43.5 32.5 46.5 Q25 48.5 19.5 45 Q13.2 40 13.4 29.5 Z" fill="#1851ac"/>
  <path d="M19.8 25.5 Q20 19.8 24.8 19.2 Q29.6 19.2 29.7 25 Q29.7 31.2 25.5 33.2 Q20.5 33.5 19.8 28 Z" fill="#ededed"/>
 </g>
  <!-- vscode -->
  <g transform="translate(1126.8 1043.7) scale(0.5)">
   <path d="M35.1 0.8 L35.1 11.5 L8 33.5 Q4 36 1.5 33.5 Q-0.5 31 1.5 28.5 Z" fill="#1677c6"/>
   <path d="M1.5 13.5 Q4 11 7 13 L35.1 34 L35.1 47.7 L1.5 18 Q-0.5 15.8 1.5 13.5 Z" fill="#0a87da"/>
   <path d="M35.1 0.5 L46.5 5.2 Q48.2 6 48.2 8 L48.2 40 Q48.2 42 46.5 42.8 L35.1 47.7 Z" fill="#25a0ec"/>
  </g>
  <rect x="1136" y="1072.4" width="6" height="2.4" rx="1.2" fill="#8a8a8a"/>
  <!-- terminal active -->
  <rect x="1164.5" y="1037" width="36" height="37.8" rx="4" fill="#f9f9f9" stroke="#e4e4e4" stroke-width="0.8"/>
  <rect x="1171" y="1046.8" width="24.3" height="18.2" rx="1.5" fill="#2f2f2f"/>
  <rect x="1171" y="1046.8" width="24.3" height="3" fill="#a8a8a8"/>
  <path d="M1174.5 1052.5 L1179 1056.2 L1174.5 1060" stroke="#cfcfcf" stroke-width="1.8" fill="none"/>
  <path d="M1181 1060.8 L1189.5 1060.8" stroke="#e0e0e0" stroke-width="1.4"/>
  <rect x="1175" y="1071.8" width="15.7" height="2.9" rx="1.45" fill="#0a6fd0"/>
  <!-- tray -->
  <path d="M1728 1058.5 L1733 1053.2 L1738 1058.5" stroke="#2a2a2a" stroke-width="1.3" fill="none"/>
  <path d="M1758.5 1058 A7 7 0 0 1 1771 1050.5" stroke="#2a2a2a" stroke-width="1.2" fill="none"/>
  <path d="M1767.5 1048.5 L1771.8 1050.2 L1771.5 1046" stroke="#2a2a2a" stroke-width="1.2" fill="none"/>
  <path d="M1763 1062 L1758.5 1060 L1758 1063.5" stroke="#2a2a2a" stroke-width="1.2" fill="none"/>
  <circle cx="1768.8" cy="1059.7" r="4" fill="#e0112b"/>
  <rect x="1789.2" y="1048.4" width="11" height="12.6" rx="1" fill="none" stroke="#2a2a2a" stroke-width="1.2"/>
  <path d="M1792.5 1063.5 L1801 1063.5 M1797 1061 L1797 1063.5" stroke="#2a2a2a" stroke-width="1.2"/>
  <rect x="1800.8" y="1047.5" width="3.6" height="5.5" rx="1.6" fill="#eeeeee" stroke="#2a2a2a" stroke-width="1"/>
  <path d="M1802.6 1053 L1802.6 1063.8" stroke="#2a2a2a" stroke-width="1.2"/>
  <path d="M1813 1053.2 L1816 1053.2 L1820 1050 L1820 1062 L1816 1058.8 L1813 1058.8 Z" fill="none" stroke="#2a2a2a" stroke-width="1.1"/>
  <path d="M1822.3 1053.5 Q1823.8 1056 1822.3 1058.5 M1824.6 1051.5 Q1827.6 1056 1824.6 1060.5 M1826.9 1049.8 Q1831.2 1056 1826.9 1062.2" stroke="#2a2a2a" stroke-width="1.1" fill="none"/>
  <text x="1900" y="1052" text-anchor="end" font-family="Liberation Sans" font-size="11.75" fill="#1a1a1a">2:23 PM</text>
  <text x="1900" y="1067.6" text-anchor="end" font-family="Liberation Sans" font-size="11.75" fill="#1a1a1a">1/16/2026</text>
 </svg>
</div>
<div id="wm">Windows Server 2025 Standard Evaluation<br>Windows License valid for 180 days<br>Build 26100.ge_release.240331-1435</div>
</body></html>
